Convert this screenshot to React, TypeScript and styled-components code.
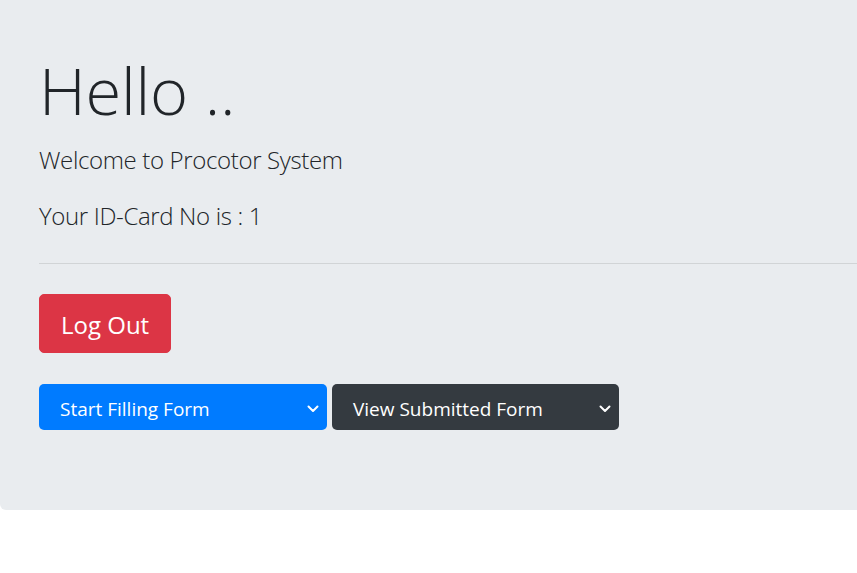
import React from "react";
import styled, { createGlobalStyle } from "styled-components";

const Global = createGlobalStyle`
  html, body { margin: 0; padding: 0; background: #fff; overflow: hidden; }
  body { font-family: "Open Sans", "Noto Sans", sans-serif; color: #212529; }
`;

const Jumbotron = styled.section`
  background: #e9ecef;
  border-radius: 0 0 0 6px;
  padding: 50px 0 80px 39px;
  margin-bottom: 40px;
`;

const Display = styled.h1`
  margin: 0 0 12px;
  font-size: 65px;
  font-weight: 300;
  letter-spacing: -0.2px;
  line-height: 80px;
  color: #212529;
`;

const Lead = styled.p`
  margin: 0 0 20px;
  font-size: 24px;
  font-weight: 300;
  letter-spacing: -0.35px;
  line-height: 36px;
  color: #212529;
`;

const Rule = styled.hr`
  border: 0;
  border-top: 1px solid rgba(0, 0, 0, 0.1);
  margin: 29px 0 30px;
`;

const DangerButton = styled.button`
  display: inline-block;
  box-sizing: border-box;
  background: #dc3545;
  color: #fff;
  border: 1px solid #dc3545;
  border-radius: 5px;
  font-family: inherit;
  font-size: 24px;
  line-height: 36px;
  padding: 12px 21px 9px;
  height: 59px;
  cursor: pointer;
`;

const SelectRow = styled.div`
  display: flex;
  gap: 5px;
  margin-top: 31px;
`;

const SelectButton = styled.div<{ $tone: "primary" | "dark" }>`
  display: flex;
  align-items: center;
  justify-content: space-between;
  box-sizing: border-box;
  width: ${(p) => (p.$tone === "primary" ? "288px" : "287px")};
  height: 46px;
  padding: 3px 8px 0 21px;
  border-radius: 5px;
  background: ${(p) => (p.$tone === "primary" ? "#007bff" : "#343a40")};
  color: #fff;
  font-size: 19px;
  line-height: 30px;
`;

const Chevron = () => (
  <svg width="12" height="8" viewBox="0 0 12 8" fill="none">
    <path d="M1.5 1.5 L6 6 L10.5 1.5" stroke="#fff" strokeWidth="2" strokeLinecap="round" strokeLinejoin="round" />
  </svg>
);

export default function App() {
  return (
    <>
      <Global />
      <Jumbotron>
        <Display>Hello ..</Display>
        <Lead>Welcome to Procotor System</Lead>
        <Lead>Your ID-Card No is : 1</Lead>
        <Rule />
        <DangerButton>Log Out</DangerButton>
        <SelectRow>
          <SelectButton $tone="primary">
            <span>Start Filling Form</span>
            <Chevron />
          </SelectButton>
          <SelectButton $tone="dark">
            <span>View Submitted Form</span>
            <Chevron />
          </SelectButton>
        </SelectRow>
      </Jumbotron>
    </>
  );
}
